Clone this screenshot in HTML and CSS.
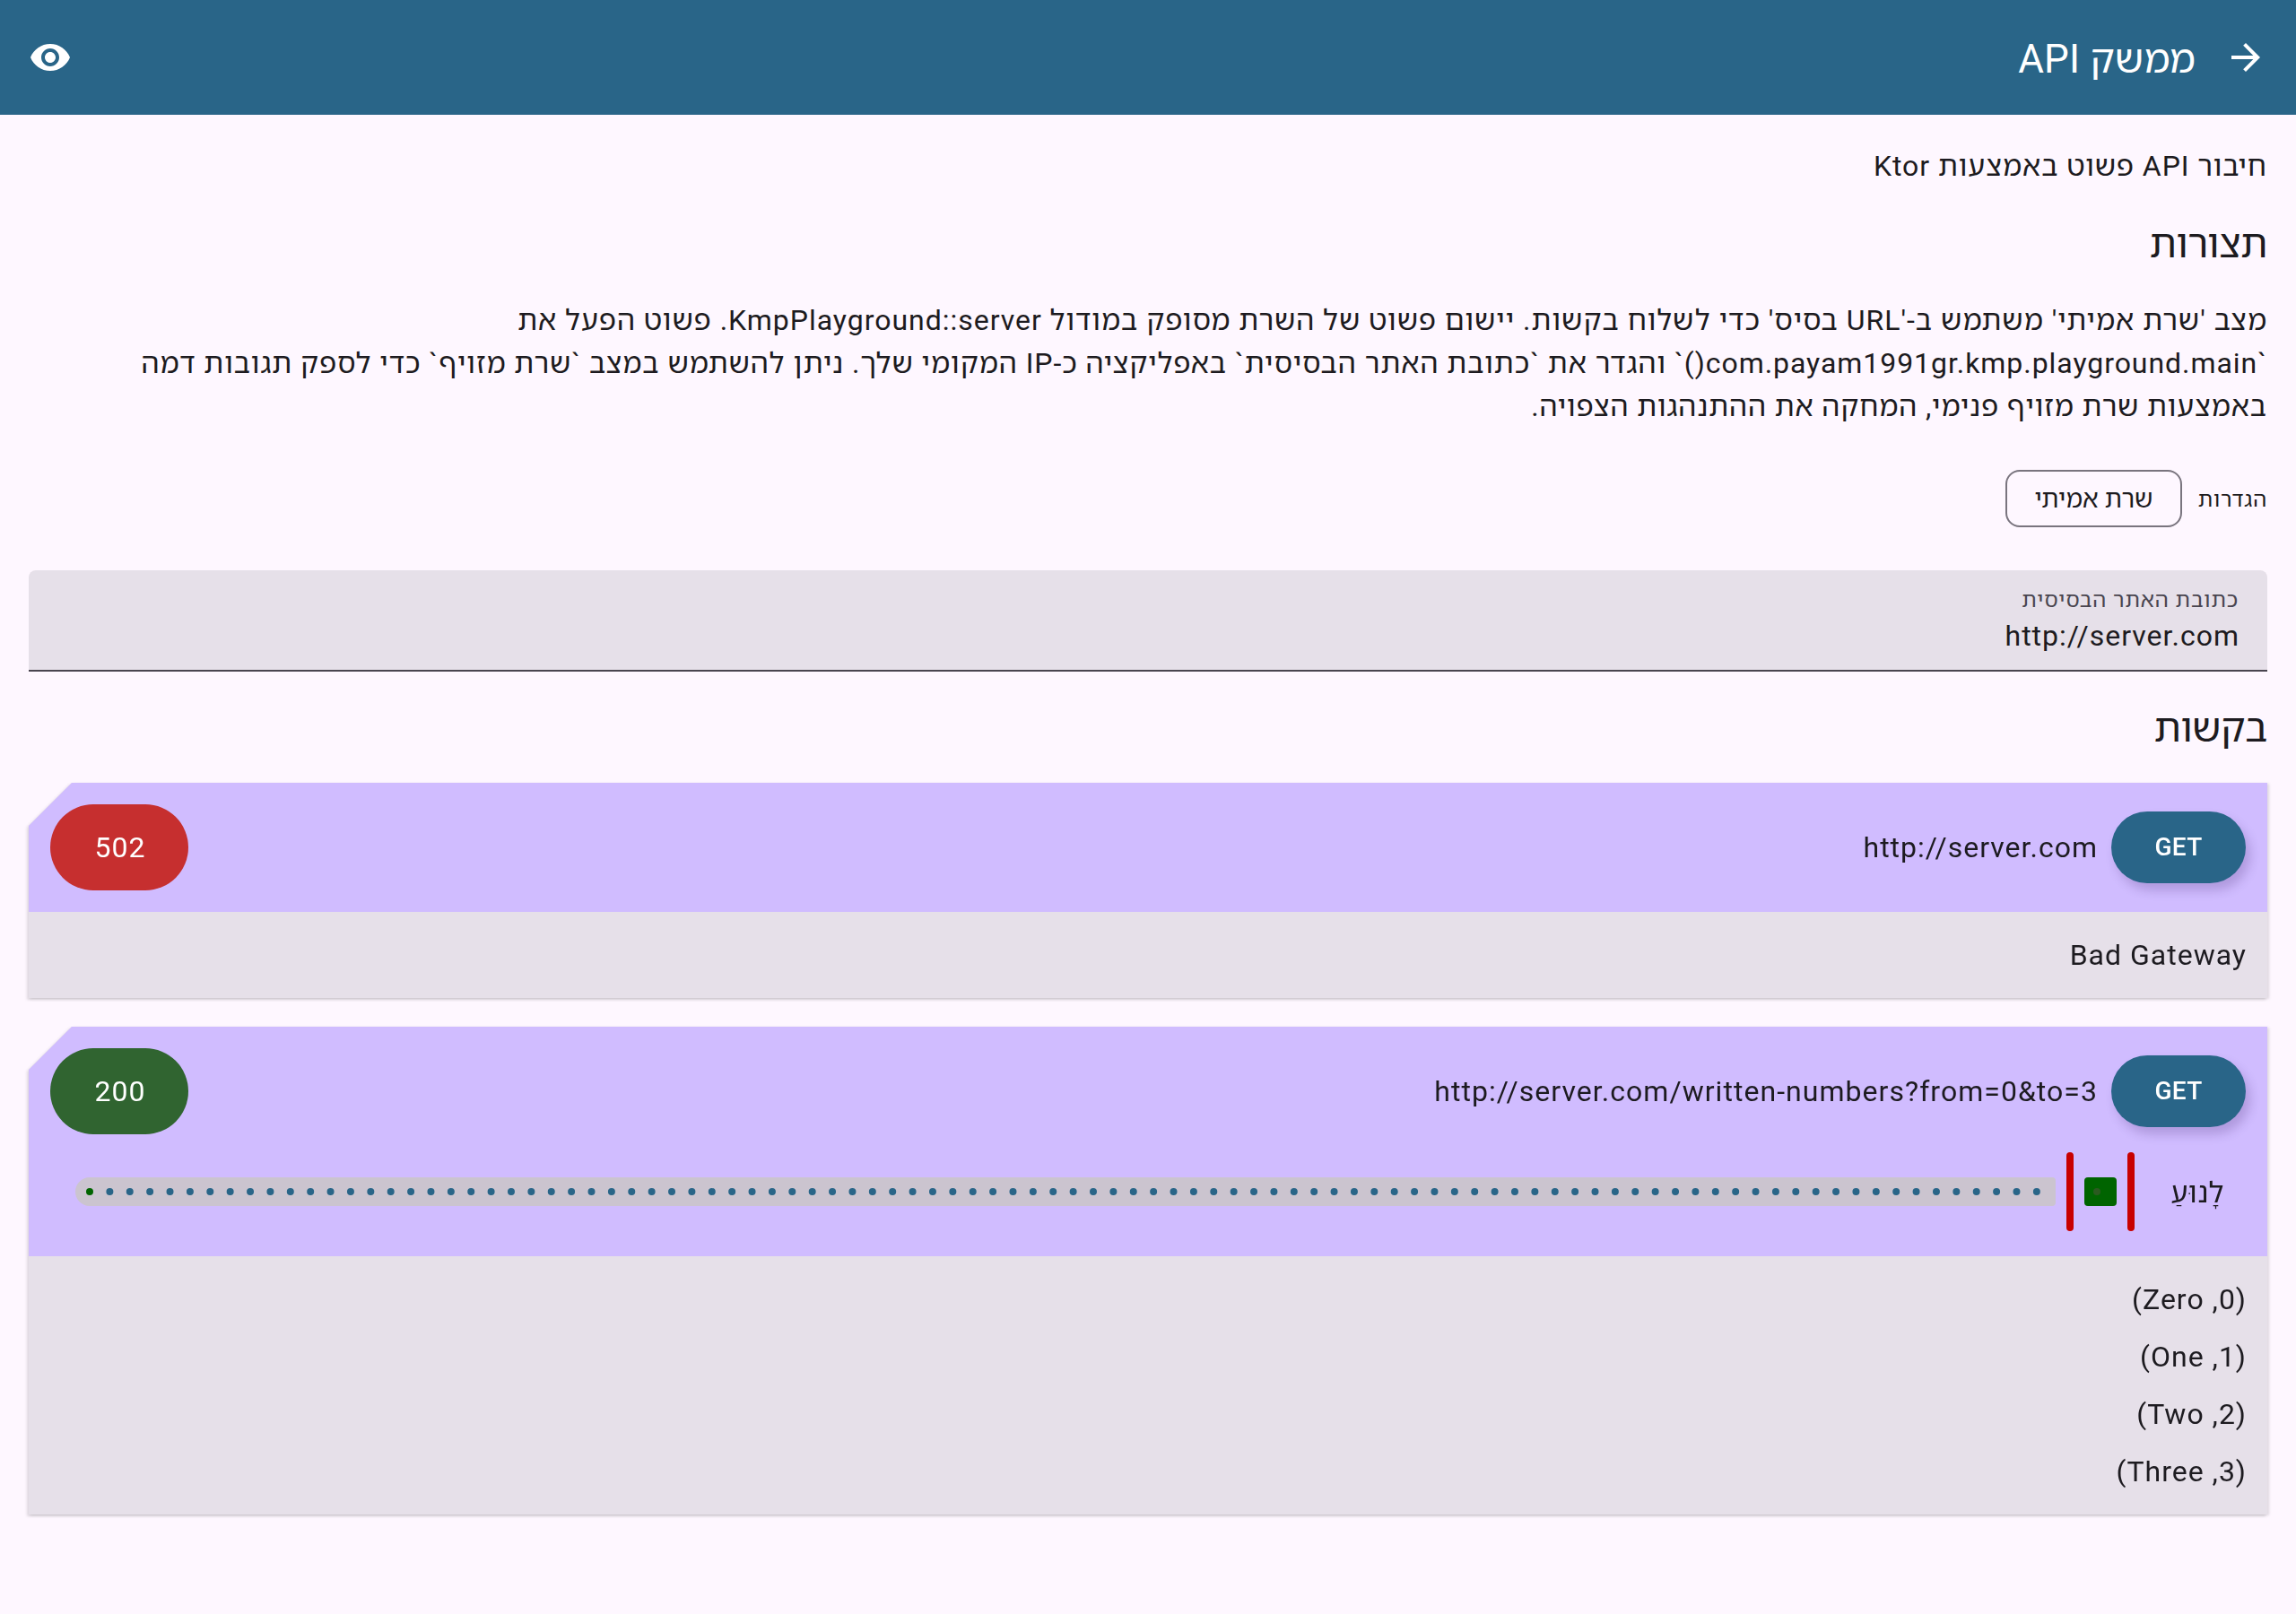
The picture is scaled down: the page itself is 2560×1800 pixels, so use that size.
FILE: index.html
```html
<!DOCTYPE html>
<html lang="he" dir="rtl">
<head>
<meta charset="utf-8">
<title>ממשק API</title>
<link rel="stylesheet" href="styles.css">
</head>
<body>
<header class="app-bar">
  <svg class="icon" viewBox="0 0 24 24"><path d="M12 4l-1.41 1.41L16.17 11H4v2h12.17l-5.58 5.59L12 20l8-8z"/></svg>
  <h1 class="app-title">ממשק API</h1>
  <svg class="icon" viewBox="0 0 24 24"><path d="M12 4.5C7 4.5 2.73 7.61 1 12c1.73 4.39 6 7.5 11 7.5s9.27-3.11 11-7.5c-1.73-4.39-6-7.5-11-7.5zM12 17c-2.76 0-5-2.24-5-5s2.24-5 5-5 5 2.24 5 5-2.24 5-5 5zm0-8c-1.66 0-3 1.34-3 3s1.34 3 3 3 3-1.34 3-3-1.34-3-3-3z"/></svg>
</header>
<main class="content">
  <p class="intro">חיבור API פשוט באמצעות Ktor</p>
  <h2 class="heading">תצורות</h2>
  <div class="description">
    <p class="line-usage">מצב 'שרת אמיתי' משתמש ב-'URL בסיס' כדי לשלוח בקשות. יישום פשוט של השרת מסופק במודול KmpPlayground::server. פשוט הפעל את</p>
    <p class="line-main">`com.payam1991gr.kmp.playground.main()` והגדר את `כתובת האתר הבסיסית` באפליקציה כ-IP המקומי שלך. ניתן להשתמש במצב `שרת מזויף` כדי לספק תגובות דמה</p>
    <p class="line-fake">באמצעות שרת מזויף פנימי, המחקה את ההתנהגות הצפויה.</p>
  </div>
  <div class="settings">
    <span class="settings-label">הגדרות</span>
    <button class="chip">שרת אמיתי</button>
  </div>
  <div class="field">
    <span class="field-label">כתובת האתר הבסיסית</span>
    <span class="field-value" dir="ltr">http://server.com</span>
  </div>
  <h2 class="heading heading-requests">בקשות</h2>
  <section class="card-shadow">
    <div class="card">
      <div class="card-head">
        <div class="request">
          <button class="get">GET</button>
          <span class="url" dir="ltr">http://server.com</span>
          <span class="status status-error">502</span>
        </div>
      </div>
      <div class="card-body"><p class="row">Bad Gateway</p></div>
    </div>
  </section>
  <section class="card-shadow">
    <div class="card">
      <div class="card-head card-head-range">
        <div class="request">
          <button class="get">GET</button>
          <span class="url url-long" dir="ltr">http://server.com/written-numbers?from=0&amp;to=3</span>
          <span class="status status-ok">200</span>
        </div>
        <div class="range">
          <span class="range-label">לָנוּעַ</span>
          <span class="thumb"></span>
          <span class="active"><span class="tick"></span></span>
          <span class="thumb"></span>
          <svg class="track" viewBox="0 0 2208 32">
            <path class="track-fill" d="M16 0H2204a4 4 0 0 1 4 4V28a4 4 0 0 1-4 4H16A16 16 0 0 1 16 0z"/>
            <path class="track-ticks" d="M38.38 16H2187.5"/>
            <circle class="track-stop" cx="16" cy="16" r="4"/>
          </svg>
        </div>
      </div>
      <div class="card-body">
        <p class="row">(0, Zero)</p>
        <p class="row">(1, One)</p>
        <p class="row">(2, Two)</p>
        <p class="row">(3, Three)</p>
      </div>
    </div>
  </section>
</main>
</body>
</html>
```
FILE: styles.css
```css
* { box-sizing: border-box; margin: 0; padding: 0; }
body {
  background: #fef7ff;
  color: #1d1b20;
  font: 400 32px/48px Roboto, "Noto Sans Hebrew", "Open Sans", sans-serif;
  letter-spacing: 1px;
}
button { font: inherit; letter-spacing: inherit; color: inherit; border: 0; background: none; }
.app-bar {
  display: flex;
  align-items: center;
  height: 128px;
  padding: 0 32px;
  background: #296588;
  color: #fff;
}
.icon { width: 48px; height: 48px; fill: currentColor; }
.app-title {
  flex: 1;
  padding: 3px 32px 0 0;
  font-size: 44px;
  line-height: 56px;
  font-weight: 400;
  letter-spacing: 0.2px;
}
.content { padding: 33px 32px 32px; white-space: nowrap; }
.intro { letter-spacing: 0.95px; }
.heading {
  margin-top: 35px;
  font-size: 44px;
  line-height: 56px;
  font-weight: 400;
  letter-spacing: -0.4px;
}
.description { margin-top: 33px; }
.line-usage { letter-spacing: 0.98px; }
.line-main { letter-spacing: 0.945px; }
.line-fake { letter-spacing: 0.86px; }
.settings { display: flex; align-items: center; gap: 16px; height: 64px; margin-top: 47px; }
.settings-label { width: 79px; padding-top: 2px; font-size: 24px; line-height: 32px; letter-spacing: 0.8px; }
.chip {
  width: 197px;
  height: 64px;
  padding-top: 2px;
  border: 2px solid #79747e;
  border-radius: 16px;
  font-size: 28px;
  line-height: 40px;
  letter-spacing: 0.1px;
}
.field {
  display: flex;
  flex-direction: column;
  align-items: flex-start;
  height: 113px;
  margin-top: 48px;
  padding: 17px 32px 0;
  background: #e6e0e9;
  border-bottom: 2px solid #49454f;
  border-radius: 8px 8px 0 0;
}
.field-label { font-size: 24px; line-height: 32px; letter-spacing: 0.87px; color: #49454f; }
.field-value { margin-right: -1px; }
.heading-requests { margin: 35px 0 33px; }
.card-shadow {
  margin-bottom: 32px;
  filter: drop-shadow(-2px 2px 1.5px rgba(0, 0, 0, 0.12)) drop-shadow(2px 1px 1.5px rgba(0, 0, 0, 0.12));
}
.card {
  background: #e6e0e9;
  clip-path: polygon(48px 0, 100% 0, 100% 100%, 0 100%, 0 48px);
}
.card-head { height: 144px; padding: 24px; background: #d0bcff; }
.card-head-range { height: 256px; }
.request { display: flex; align-items: center; gap: 16px; height: 96px; }
.url { margin-right: -1px; }
.url-long { letter-spacing: 1.04px; }
.get {
  width: 150px;
  height: 80px;
  border-radius: 40px;
  background: #296588;
  color: #fff;
  font-size: 28px;
  font-weight: 500;
  letter-spacing: 0.2px;
  box-shadow: 5px 8px 12px rgba(60, 30, 100, 0.22);
}
.status {
  width: 154px;
  margin-right: auto;
  padding-left: 2px;
  border-radius: 48px;
  color: #fff;
  line-height: 96px;
  text-align: center;
}
.status-error { background: #c62f2f; }
.status-ok { background: #306430; }
.range { display: flex; align-items: center; gap: 12px; height: 88px; margin-top: 20px; }
.range-label { width: 112px; padding: 1px 24px 0 0; letter-spacing: 0.5px; }
.thumb { width: 8px; height: 88px; border-radius: 4px; background: #c80000; }
.active {
  display: flex;
  align-items: center;
  width: 36px;
  height: 32px;
  padding-right: 18px;
  border-radius: 4px;
  background: #006400;
}
.tick { width: 8px; height: 8px; border-radius: 50%; background: #2b5a20; }
.track { width: 2208px; height: 32px; }
.track-fill { fill: #cbc4cf; }
.track-ticks { fill: none; stroke: #296588; stroke-width: 8; stroke-linecap: round; stroke-dasharray: 0 22.38; }
.track-stop { fill: #006400; }
.card-body { padding: 16px 24px; }
.row { margin-right: -1px; line-height: 64px; }
```
